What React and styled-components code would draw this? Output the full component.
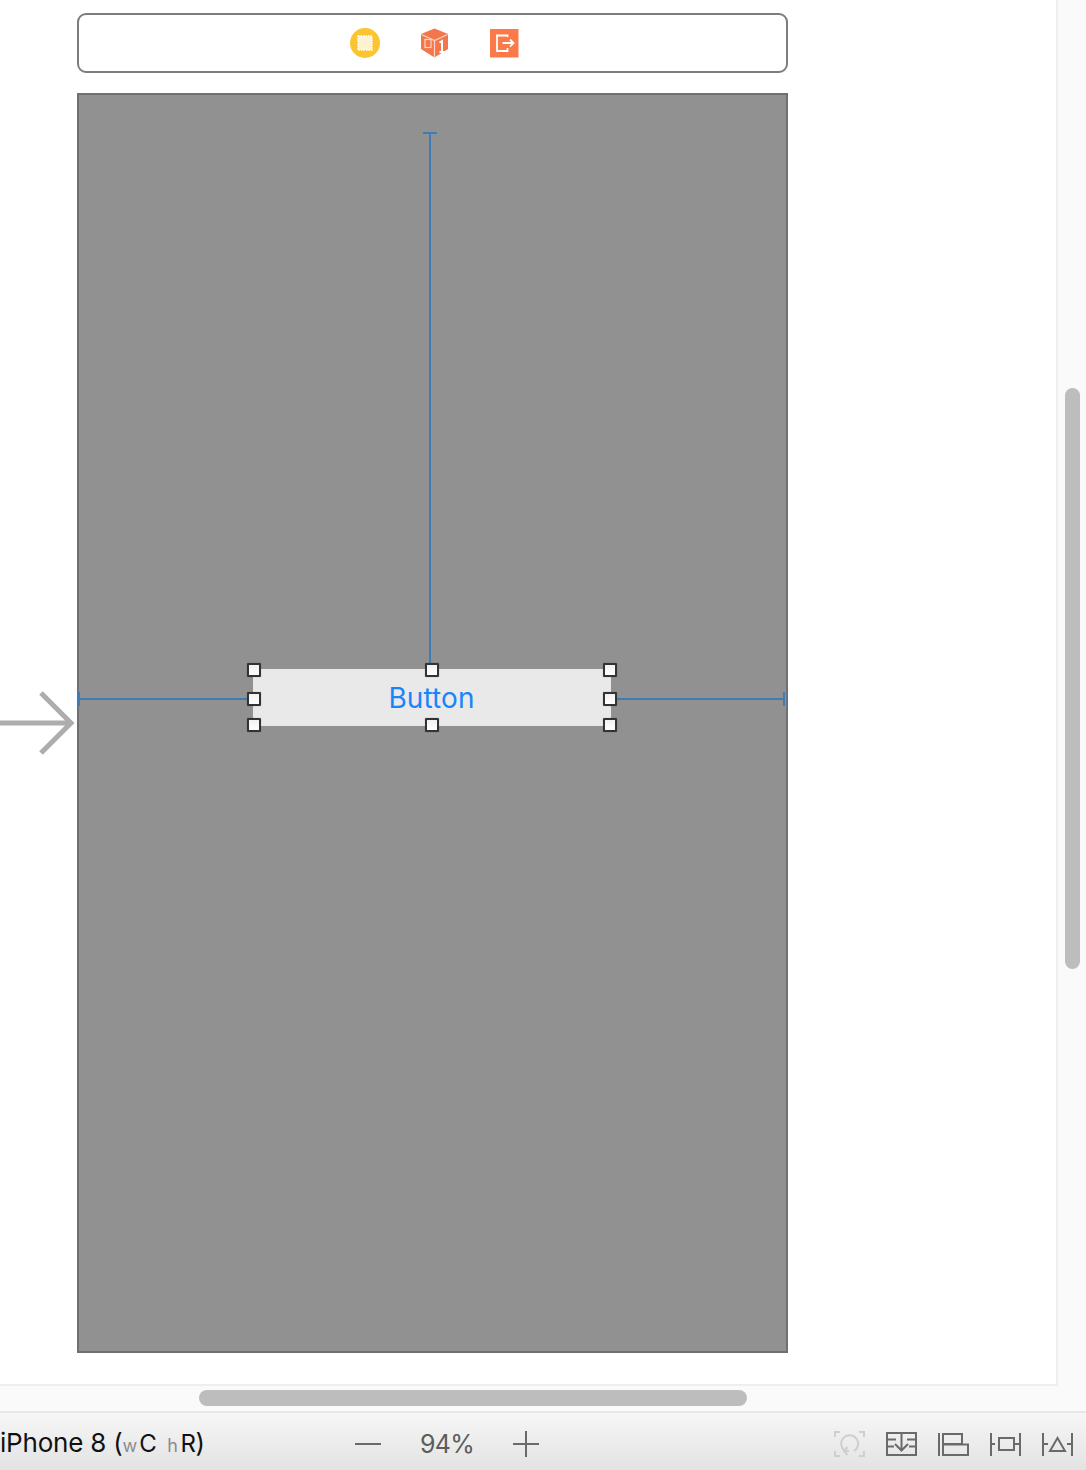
import React from 'react';
import styled, { createGlobalStyle } from 'styled-components';

const GlobalStyle = createGlobalStyle`
    html, body {
        margin: 0;
        padding: 0;
        background: #fff;
    }
    body {
        font-family: Inter, "Liberation Sans", sans-serif;
    }
`;

const Page = styled.div`
    width: 1086px;
    height: 1470px;
    display: flex;
    flex-direction: column;
    overflow: hidden;
`;

const Workspace = styled.div`
    height: 1386px;
    display: flex;
`;

const Canvas = styled.div`
    position: relative;
    width: 1058px;
    height: 1386px;
    box-sizing: border-box;
    padding: 13px 0 0 77px;
    border-right: 2px solid #eeeeee;
    border-bottom: 2px solid #eeeeee;
    background: #fff;
`;

const VerticalTrack = styled.div`
    width: 28px;
    box-sizing: border-box;
    padding: 388px 6px 0 7px;
    background: #fafafa;
`;

const VerticalThumb = styled.div`
    width: 15px;
    height: 581px;
    border-radius: 8px;
    background: #bdbdbd;
`;

const Dock = styled.div`
    width: 711px;
    height: 60px;
    box-sizing: border-box;
    border: 2px solid #7d7d7d;
    border-radius: 9px;
    display: flex;
    align-items: center;
    padding-left: 271px;
    gap: 40px;
    background: #fff;
`;

const DockIcon = styled.svg`
    width: 30px;
    height: 30px;
    flex: none;
`;

const SceneView = styled.div`
    position: relative;
    width: 711px;
    height: 1260px;
    margin-top: 20px;
    box-sizing: border-box;
    padding: 574px 0 0 174px;
    border: 2px solid #707070;
    background: #919191;
`;

const SceneButton = styled.div`
    position: relative;
    width: 358px;
    height: 57px;
    box-sizing: border-box;
    padding: 1px 1px 0 0;
    display: flex;
    align-items: center;
    justify-content: center;
    background: #e9e9e9;
    color: #1a84fb;
    font-size: 28px;
    letter-spacing: 0.1px;
`;

const Handle = styled.span`
    position: absolute;
    width: 10px;
    height: 10px;
    left: ${p => p.$x}px;
    top: ${p => p.$y}px;
    border: 2px solid #333;
    border-radius: 1px;
    background: linear-gradient(#f2f2f2, #fff);
    box-shadow: 0 0 1px rgba(0, 0, 0, 0.5);
`;

const ConstraintV = styled.div`
    position: absolute;
    left: 350px;
    top: 37px;
    width: 2px;
    height: 537px;
    background: #3f7cb5;
    &::before {
        content: '';
        position: absolute;
        left: -6px;
        top: 0;
        width: 14px;
        height: 2px;
        background: #3f7cb5;
    }
`;

const ConstraintH = styled.div`
    position: absolute;
    top: 603px;
    left: ${p => p.$left}px;
    width: ${p => p.$width}px;
    height: 2px;
    background: #3f7cb5;
    &::before {
        content: '';
        position: absolute;
        ${p => p.$side}: 0;
        top: -6px;
        width: 2px;
        height: 14px;
        background: #3f7cb5;
    }
`;

const EntryArrow = styled.svg`
    position: absolute;
    left: 0;
    top: 688px;
    width: 78px;
    height: 70px;
`;

const HorizontalTrack = styled.div`
    height: 27px;
    box-sizing: border-box;
    padding: 4px 0 0 199px;
    background: #fafafa;
    border-bottom: 2px solid #e7e7e7;
`;

const HorizontalThumb = styled.div`
    width: 548px;
    height: 16px;
    border-radius: 8px;
    background: #bdbdbd;
`;

const BottomBar = styled.div`
    height: 57px;
    box-sizing: border-box;
    padding-top: 4px;
    display: flex;
    align-items: center;
    background: linear-gradient(#f6f6f6, #e3e3e3);
`;

const DeviceLabel = styled.div`
    width: 354px;
    flex: none;
    margin-top: -2px;
    color: #111;
    font-size: 26px;
    white-space: nowrap;
    letter-spacing: -0.2px;
`;

const SizeClass = styled.span`
    color: #8c8c8c;
    font-size: 18px;
    margin: ${p => p.$margin};
`;

const SizeValue = styled.span`
    font-size: 24px;
    letter-spacing: -0.5px;
`;

const ZoomGroup = styled.div`
    width: 186px;
    flex: none;
    display: flex;
    align-items: center;
    justify-content: space-between;
`;

const ZoomButton = styled.svg`
    width: 28px;
    height: 28px;
    flex: none;
`;

const ZoomValue = styled.div`
    color: #5c5c5c;
    font-size: 25px;
    letter-spacing: -0.8px;
`;

const ToolGroup = styled.div`
    margin-left: auto;
    padding-right: 13px;
    display: flex;
    align-items: center;
    gap: 21px;
`;

const ToolIcon = styled.svg`
    width: 31px;
    height: 26px;
    flex: none;
    fill: none;
    stroke: ${p => p.$dim ? '#cfcfcf' : '#6a6a6a'};
    stroke-width: 2;
`;

const handles = [
    [-6, -6], [172, -6], [350, -6],
    [-6, 23], [350, 23],
    [-6, 49], [172, 49], [350, 49]
];

const App = () => {
    return (
        <Page>
            <GlobalStyle />
            <Workspace>
                <Canvas>
                    <Dock>
                        <DockIcon viewBox="0 0 30 30">
                            <circle cx="15" cy="15" r="15" fill="#fbc531" />
                            <rect x="8" y="8" width="14" height="14" fill="#fdf3d0" />
                            <rect x="8" y="8" width="14" height="14" fill="none" stroke="#fff" strokeWidth="1.5" strokeDasharray="1.5 1" />
                        </DockIcon>
                        <DockIcon viewBox="0 0 30 30">
                            <path d="M14.5 0.5 L28 6 V21 L14.5 29.5 L1 21 V6 Z" fill="#f4764c" />
                            <path d="M1.5 6.5 L14.5 12.5 L27.5 6.5 M14.5 12.5 V29" fill="none" stroke="#fbd4c4" strokeWidth="1.2" />
                            <rect x="5" y="11.5" width="6" height="8" fill="none" stroke="#fbd4c4" strokeWidth="1.2" />
                            <path d="M19.5 14.5 L22 13 V24 M19.5 24 H24.5" fill="none" stroke="#fff" strokeWidth="2" />
                        </DockIcon>
                        <DockIcon viewBox="0 0 30 30">
                            <rect x="0" y="1" width="28.5" height="28.5" fill="#fc7a4a" />
                            <path d="M17.5 9 V7.5 H7 V23 H17.5 V20" fill="none" stroke="#fff" strokeWidth="1.8" />
                            <path d="M12.5 15 H23.5 M20 11.5 L23.5 15 L20 18.5" fill="none" stroke="#fff" strokeWidth="1.8" />
                        </DockIcon>
                    </Dock>
                    <SceneView>
                        <ConstraintV />
                        <ConstraintH $left={-1} $width={173} $side="left" />
                        <ConstraintH $left={533} $width={173} $side="right" />
                        <SceneButton>
                            Button
                            {handles.map(([x, y]) => <Handle key={`${x}-${y}`} $x={x} $y={y} />)}
                        </SceneButton>
                    </SceneView>
                    <EntryArrow viewBox="0 0 78 70">
                        <path d="M0 35 H71 M41 5 L71 35 L41 65" fill="none" stroke="#adadad" strokeWidth="5" />
                    </EntryArrow>
                </Canvas>
                <VerticalTrack>
                    <VerticalThumb />
                </VerticalTrack>
            </Workspace>
            <HorizontalTrack>
                <HorizontalThumb />
            </HorizontalTrack>
            <BottomBar>
                <DeviceLabel>
                    iPhone 8 (<SizeClass $margin="0 2px 0 0">w</SizeClass><SizeValue>C</SizeValue><SizeClass $margin="0 3px 0 11px">h</SizeClass><SizeValue>R</SizeValue>)
                </DeviceLabel>
                <ZoomGroup>
                    <ZoomButton viewBox="0 0 28 28">
                        <path d="M1 14 H27" stroke="#6a6a6a" strokeWidth="2" />
                    </ZoomButton>
                    <ZoomValue>94%</ZoomValue>
                    <ZoomButton viewBox="0 0 28 28">
                        <path d="M1 14 H27 M14 1 V27" stroke="#6a6a6a" strokeWidth="2" />
                    </ZoomButton>
                </ZoomGroup>
                <ToolGroup>
                    <ToolIcon $dim viewBox="0 0 31 26">
                        <path d="M1 6 V1 H6 M25 1 H30 V6 M30 20 V25 H25 M6 25 H1 V20" />
                        <path d="M10 19 A8.5 8.5 0 1 1 20 20 M15 20 H10 M13.5 16 L10 20 L13.5 24" />
                    </ToolIcon>
                    <ToolIcon viewBox="0 0 31 26">
                        <path d="M1 2 H30 V24 H1 Z M1 8.5 H10 M21 8.5 H30 M1 15.5 H8 M23 15.5 H30 M15.5 3 V18 M9 13 L15.5 19.5 L22 13" />
                    </ToolIcon>
                    <ToolIcon viewBox="0 0 31 26">
                        <path d="M1 2 V25 M5 3 H24 V13 H5 Z M5 13.5 H30 V24 H5 Z" />
                    </ToolIcon>
                    <ToolIcon viewBox="0 0 31 26">
                        <path d="M1 2 V25 M30 2 V25 M1 13 H5 M25 13 H30 M9 7 H24 V19 H9 Z" />
                    </ToolIcon>
                    <ToolIcon viewBox="0 0 31 26">
                        <path d="M1 2 V25 M30 2 V25 M1 13 H6 M25 13 H30 M15.5 7 L23 20 H8 Z" />
                    </ToolIcon>
                </ToolGroup>
            </BottomBar>
        </Page>
    );
};

export default App;
